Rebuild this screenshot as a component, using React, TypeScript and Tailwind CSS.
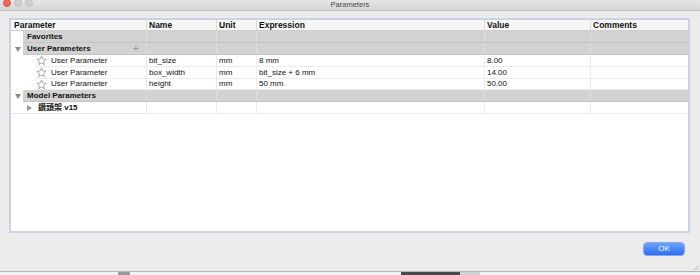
import React from "react";

const font = { fontFamily: '"Liberation Sans", "Noto Sans CJK TC", sans-serif' };

// column widths in px: Parameter, Name, Unit, Expression, Value, Comments
const widths = ["w-[136px]", "w-[70px]", "w-[40px]", "w-[228px]", "w-[106px]", "w-[97px]"];

const params = [
  { name: "bit_size", unit: "mm", expr: "8 mm", value: "8.00", h: "h-[12px]" },
  { name: "box_width", unit: "mm", expr: "bit_size + 6 mm", value: "14.00", h: "h-[12px]" },
  { name: "height", unit: "mm", expr: "50 mm", value: "50.00", h: "h-[11px]" },
];

function DownArrow() {
  return (
    <svg width="6" height="5" viewBox="0 0 6 5">
      <polygon points="0,0 6,0 3,5" fill="#8a8a8a" />
    </svg>
  );
}

function RightArrow() {
  return (
    <svg width="5" height="6" viewBox="0 0 5 6">
      <polygon points="0,0 5,3 0,6" fill="#9a9a9a" />
    </svg>
  );
}

function Star() {
  return (
    <svg width="11" height="11" viewBox="0 0 24 24">
      <polygon
        points="12,2 14.9,8.6 22,9.3 16.6,14 18.2,21 12,17.3 5.8,21 7.4,14 2,9.3 9.1,8.6"
        fill="none"
        stroke="#8c8c8c"
        strokeWidth="1.6"
        strokeLinejoin="round"
      />
    </svg>
  );
}

// grey group row: white gutter holding the arrow, grey band across every column
function GroupRow({ label, arrow, plus, h = "h-[12px]" }: { label: string; arrow?: boolean; plus?: boolean; h?: string }) {
  return (
    <div className={`flex ${h}`}>
      <div className="w-[12px] flex items-center justify-center shrink-0 pl-[1px]">{arrow && <DownArrow />}</div>
      <div className="flex bg-[#d2d2d2] border-b border-[#c4c4c4] flex-1">
        <div className="w-[124px] flex items-center justify-between pl-[4px] pr-[7px] border-r border-[#dedede] font-bold">
          <span>{label}</span>
          {plus && <span className="text-[#9a9a9a] text-[11px] font-normal leading-none">+</span>}
        </div>
        {widths.slice(1).map((w, i) => (
          <div key={i} className={`${w} ${i < 4 ? "border-r border-[#dedede]" : ""}`} />
        ))}
      </div>
    </div>
  );
}

export default function App() {
  return (
    <div className="w-[700px] h-[275px] overflow-hidden bg-white text-[8px] text-[#111]" style={font}>
      <div className="h-[272px] bg-[#ececec] flex flex-col border-b border-[#b5b5b5] relative">
        {/* title bar */}
        <div className="h-[11px] bg-gradient-to-b from-[#e6e6e6] to-[#d6d6d6] border-b border-[#c2c2c2] relative flex items-center justify-center">
          <div className="absolute left-[3px] top-[-1px] flex gap-[3px]">
            <div className="w-[8px] h-[8px] rounded-full bg-[#ee6a5f] border border-[#d8554b]" />
            <div className="w-[8px] h-[8px] rounded-full bg-[#d0d0d0] border border-[#c0c0c0]" />
            <div className="w-[8px] h-[8px] rounded-full bg-[#d0d0d0] border border-[#c0c0c0]" />
          </div>
          <span className="text-[7.5px] text-[#4a4a4a] leading-none -mt-[1px]">Parameters</span>
        </div>

        {/* table frame */}
        <div className="mt-[7px] ml-[9px] w-[681px] h-[215px] border-2 border-[#c9d3e6] bg-white">
          <div className="flex h-[11px] bg-[#f6f6f6] border-b border-[#cfcfcf] font-bold text-[8.5px]">
            {["Parameter", "Name", "Unit", "Expression", "Value", "Comments"].map((t, i) => (
              <div
                key={t}
                className={`${widths[i]} flex items-center ${i === 0 ? "pl-[3px]" : "pl-[2px]"} ${i < 5 ? "border-r border-[#dcdcdc]" : ""}`}
              >
                {t}
              </div>
            ))}
          </div>

          <GroupRow label="Favorites" />
          <GroupRow label="User Parameters" arrow plus />

          {params.map((p) => (
            <div key={p.name} className={`flex ${p.h}`}>
              <div className="w-[136px] flex items-center border-r border-[#e8e8e8]">
                <div className="w-[24px]" />
                <div className="flex-1 flex items-center h-full border-b border-[#ececec]">
                  <div className="w-[16px] flex items-center pl-[1px]">
                    <Star />
                  </div>
                  <span>User Parameter</span>
                </div>
              </div>
              {[p.name, p.unit, p.expr, p.value, ""].map((v, i) => (
                <div
                  key={i}
                  className={`${widths[i + 1]} flex items-center pl-[2px] border-b border-[#ececec] ${i < 4 ? "border-r border-[#e8e8e8]" : ""}`}
                >
                  {v}
                </div>
              ))}
            </div>
          ))}

          <GroupRow label="Model Parameters" arrow />

          <div className="flex h-[12px]">
            <div className="w-[136px] flex items-center border-r border-b border-[#e8e8e8]">
              <div className="w-[22px] flex items-center justify-end pr-[1px]">
                <RightArrow />
              </div>
              <span className="font-bold ml-[5px]">鑽頭架 v15</span>
            </div>
            {widths.slice(1).map((w, i) => (
              <div key={i} className={`${w} border-b border-[#ececec] ${i < 4 ? "border-r border-[#e8e8e8]" : ""}`} />
            ))}
          </div>
        </div>

        {/* footer */}
        <div className="flex justify-end mt-[10px] pr-[16px]">
          <button className="w-[40px] h-[12px] rounded-[3px] bg-gradient-to-b from-[#6aa2fb] to-[#2f6ef0] text-white text-[8px] leading-none flex items-center justify-center shadow-[0_0_0_0.5px_#2a62d8]">
            OK
          </button>
        </div>

        {/* resize grip */}
        <svg className="absolute right-[1px] bottom-[1px]" width="6" height="6" viewBox="0 0 6 6">
          <line x1="1" y1="6" x2="6" y2="1" stroke="#a8a8a8" strokeWidth="0.7" />
          <line x1="3.5" y1="6" x2="6" y2="3.5" stroke="#a8a8a8" strokeWidth="0.7" />
        </svg>
      </div>

      {/* desktop behind the window */}
      <div className="flex h-[3px] bg-[#f2f2f2]">
        <div className="w-[118px]" />
        <div className="w-[12px] bg-[#9a9a9a]" />
        <div className="w-[271px]" />
        <div className="w-[59px] bg-[#4a4a4a]" />
        <div className="w-[20px] bg-[#cfcfcf]" />
      </div>
    </div>
  );
}
